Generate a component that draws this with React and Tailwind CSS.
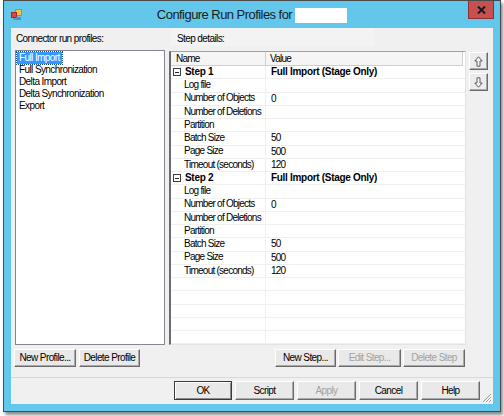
import React from 'react';

const rows = [
  { step: 'Step 1', value: 'Full Import (Stage Only)' },
  { name: 'Log file', value: '' },
  { name: 'Number of Objects', value: '0' },
  { name: 'Number of Deletions', value: '' },
  { name: 'Partition', value: '' },
  { name: 'Batch Size', value: '50' },
  { name: 'Page Size', value: '500' },
  { name: 'Timeout (seconds)', value: '120' },
  { step: 'Step 2', value: 'Full Import (Stage Only)' },
  { name: 'Log file', value: '' },
  { name: 'Number of Objects', value: '0' },
  { name: 'Number of Deletions', value: '' },
  { name: 'Partition', value: '' },
  { name: 'Batch Size', value: '50' },
  { name: 'Page Size', value: '500' },
  { name: 'Timeout (seconds)', value: '120' },
  {}, {}, {}, {}, {},
];

const profiles = ['Full Import', 'Full Synchronization', 'Delta Import', 'Delta Synchronization', 'Export'];

const Btn = ({ children, w = 'w-[62px]', h = 'h-[18px]', disabled, primary }) => (
  <button
    className={`${w} ${h} flex items-center justify-center bg-[#e9e9e9] border text-[10px] tracking-[-0.6px] leading-none whitespace-nowrap ${
      primary
        ? 'border-[#3a3a3a] shadow-[inset_1px_1px_0_#fff,inset_-1px_-1px_0_#8a8a8a]'
        : 'border-t-white border-l-white border-r-[#6a6a6a] border-b-[#6a6a6a] shadow-[inset_-1px_-1px_0_#a9a9a9]'
    } ${disabled ? 'text-[#a3a3a3]' : 'text-black'}`}
  >
    {children}
  </button>
);

const ArrowBtn = ({ down }) => (
  <button className="w-[19px] h-[18px] flex items-center justify-center bg-[#ececec] border border-t-white border-l-white border-r-[#6a6a6a] border-b-[#6a6a6a] shadow-[inset_-1px_-1px_0_#a9a9a9]">
    <svg width="9" height="11" viewBox="0 0 9 11" className={down ? 'rotate-180' : ''}>
      <path d="M4.5 0.8 L8.2 5 H6 V10.2 H3 V5 H0.8 Z" fill="#f4f4f4" stroke="#5a5a5a" strokeWidth="1" />
    </svg>
  </button>
);

export default function App() {
  return (
    <div className="w-[504px] h-[416px] bg-white pl-[3px] font-['Liberation_Sans',Arial,sans-serif] text-black">
      <div className="w-[498px] h-[412px] bg-[#62c7ea] border border-[#4a4a4a] flex flex-col shadow-[2px_3px_3px_rgba(0,0,0,0.45)]">
        {/* Title bar */}
        <div className="h-[27px] flex">
          <div className="w-[33px] pl-[7px] pt-[8px]">
            <svg width="11" height="12" viewBox="0 0 11 12">
              <rect x="4.5" y="0.5" width="6" height="6" fill="#f7c23b" stroke="#c98a12" />
              <rect x="0.5" y="3.5" width="5" height="5" fill="#e0453a" stroke="#a32a22" />
              <rect x="5" y="8" width="5" height="3" fill="#4c8fd6" />
              <path d="M2 10 H5" stroke="#4c8fd6" strokeWidth="1.5" />
            </svg>
          </div>
          <div className="flex-1 flex items-center justify-center gap-[3px] pt-[1px]">
            <span className="text-[13px] tracking-[-0.55px] text-[#1c1c1c]">Configure Run Profiles for</span>
            <span className="w-[52px] h-[15px] bg-white" />
          </div>
          <div className="w-[33px] pl-[1px]">
            <div className="w-[26px] h-[18px] bg-[#c75050] border border-t-0 border-[#8f2e2e] flex items-center justify-center">
              <svg width="9" height="8" viewBox="0 0 9 8">
                <path d="M1 0.5 L8 7.5 M8 0.5 L1 7.5" stroke="#1a1a1a" strokeWidth="2" />
              </svg>
            </div>
          </div>
        </div>

        {/* Client area */}
        <div className="ml-[7px] mr-[7px] h-[376px] bg-[#f0f0f0] flex flex-col relative text-[10px] tracking-[-0.6px]">
          <div className="h-[22px] pt-[5px] flex leading-[12px]">
            <span className="ml-[5px] w-[155px]">Connector run profiles:</span>
            <span className="bg-[#f3f3f3] w-[203px] -mt-[5px] pt-[5px] pl-[6px] h-[18px]">Step details:</span>
          </div>

          <div className="flex h-[295px]">
            {/* Profile list */}
            <div className="ml-[4px] w-[150px] h-[295px] bg-white border border-[#828790] pt-[1px] pl-[1px] flex flex-col leading-[12px]">
              {profiles.map((p, i) => (
                <div key={p} className="h-[12px] whitespace-nowrap">
                  <span className={`inline-block px-[2px] ${i === 0 ? 'bg-[#3399ff] text-white outline-1 outline-dotted outline-[#1a4f8a]' : ''}`}>
                    {p}
                  </span>
                </div>
              ))}
            </div>

            {/* Step grid */}
            <div className="ml-[4px] mt-[1px] w-[297px] h-[294px] bg-white border border-[#a0a0a0] border-l-2 border-l-[#6b6b6b] border-r-[#e3e3e3] border-b-[#e3e3e3] flex flex-col overflow-hidden whitespace-nowrap tracking-[-0.75px]">
              <div className="h-[14px] flex bg-[#f5f5f5] border-b border-r border-[#cfcfcf] leading-[13px] shrink-0 mr-[2px]">
                <div className="w-[95px] pl-[5px] border-r border-[#cfcfcf]">Name</div>
                <div className="flex-1 pl-[4px]">Value</div>
              </div>
              {rows.map((r, i) => (
                <div key={i} className="h-[13.25px] shrink-0 flex border-b border-[#f0f0f0] leading-[12.5px]">
                  <div className="w-[95px] shrink-0 flex items-center border-r border-[#f0f0f0] overflow-hidden">
                    {r.step ? (
                      <>
                        <span className="ml-[2px] w-[8px] h-[8px] border border-[#3c3c3c] flex items-center justify-center">
                          <span className="w-[4px] h-[1px] bg-[#222]" />
                        </span>
                        <span className="ml-[4px] font-bold tracking-[-0.3px]">{r.step}</span>
                      </>
                    ) : (
                      <span className="ml-[13px]">{r.name}</span>
                    )}
                  </div>
                  <div className={`flex-1 pl-[5px] ${r.step ? 'font-bold tracking-[-0.3px]' : ''}`}>{r.value}</div>
                </div>
              ))}
            </div>

            {/* Move buttons */}
            <div className="ml-[3px] pt-[2px] flex flex-col gap-[3px]">
              <ArrowBtn />
              <ArrowBtn down />
            </div>
          </div>

          <div className="mt-[4px] h-[18px] flex">
            <div className="ml-[3px] flex gap-[3px]">
              <Btn>New Profile...</Btn>
              <Btn w="w-[61px]">Delete Profile</Btn>
            </div>
            <div className="ml-[135px] flex gap-[2px]">
              <Btn w="w-[61px]">New Step...</Btn>
              <Btn w="w-[63px]" disabled>Edit Step...</Btn>
              <Btn w="w-[62px]" disabled>Delete Step</Btn>
            </div>
          </div>

          <div className="mt-[10px] border-t border-[#d9d9d9]" />

          <div className="pt-[3px] flex justify-end gap-[3px] pr-[13px]">
            <Btn w="w-[58px]" h="h-[19px]" primary>OK</Btn>
            <Btn w="w-[59px]" h="h-[19px]">Script</Btn>
            <Btn w="w-[59px]" h="h-[19px]" disabled>Apply</Btn>
            <Btn w="w-[59px]" h="h-[19px]">Cancel</Btn>
            <Btn w="w-[59px]" h="h-[19px]">Help</Btn>
          </div>

          {/* Size grip */}
          <svg className="absolute right-[1px] bottom-[1px]" width="10" height="10" viewBox="0 0 10 10">
            <path d="M9 1 L1 9 M9 4 L4 9 M9 7 L7 9" stroke="#9a9a9a" strokeWidth="1" />
            <path d="M10 2 L2 10 M10 5 L5 10 M10 8 L8 10" stroke="#ffffff" strokeWidth="1" />
          </svg>
        </div>
      </div>
    </div>
  );
}
